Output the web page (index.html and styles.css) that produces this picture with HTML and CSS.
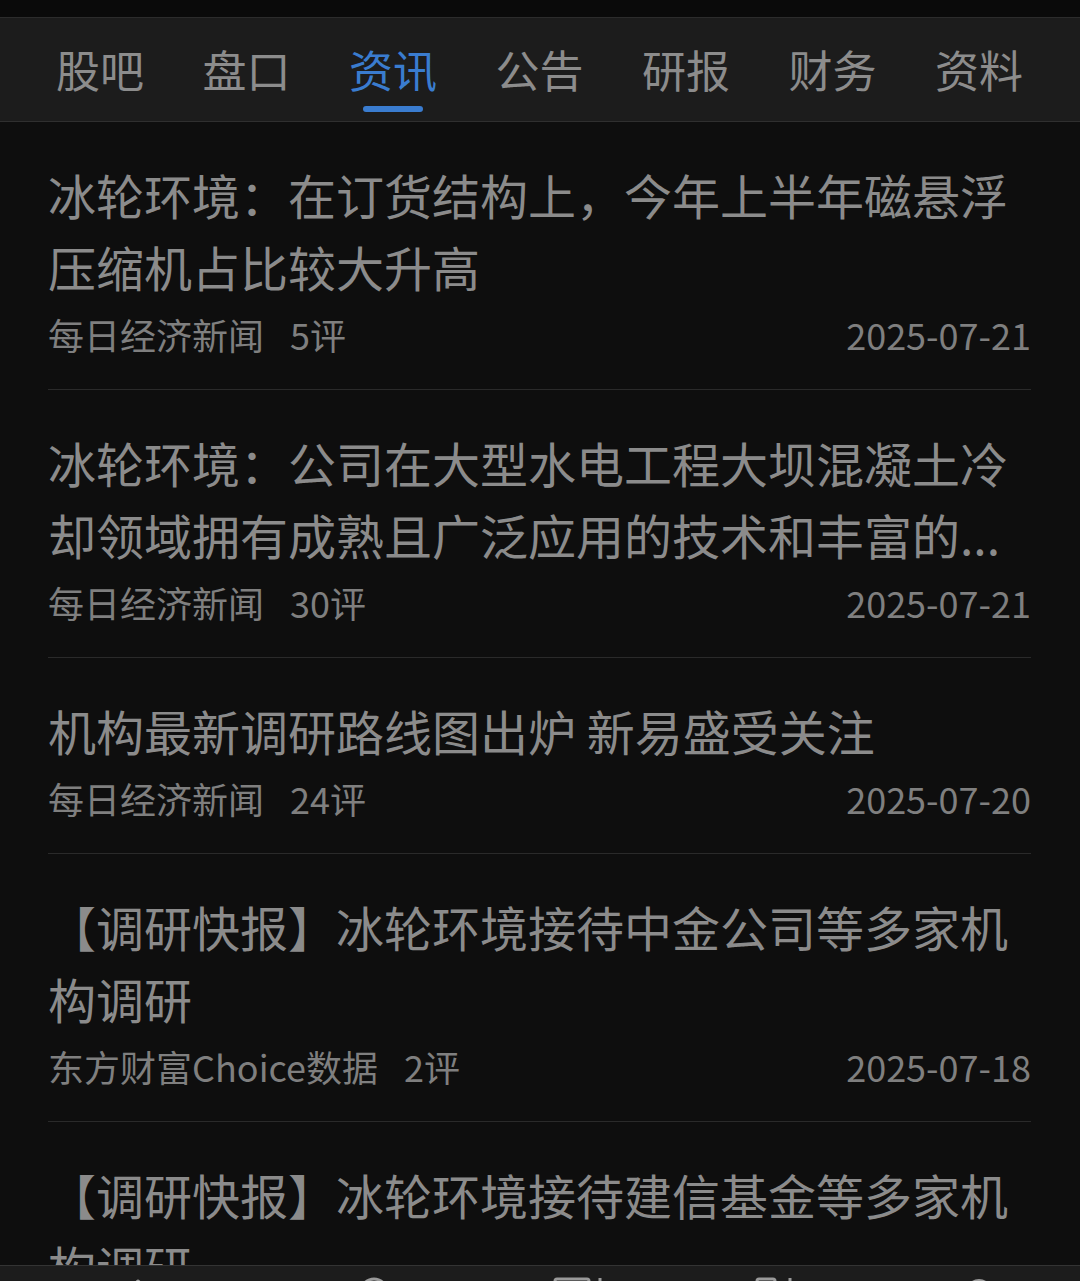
FILE: index.html
```html
<!DOCTYPE html>
<html lang="zh-CN">
<head>
<meta charset="UTF-8" />
<meta name="viewport" content="width=device-width, initial-scale=1" />
<title>资讯</title>
<link rel="stylesheet" href="styles.css">
</head>
<body>

  <!-- Status strip + tab bar -->
  <div class="top-strip"></div>
  <nav class="tabs">
    <div class="tab">股吧</div>
    <div class="tab">盘口</div>
    <div class="tab active">资讯</div>
    <div class="tab">公告</div>
    <div class="tab">研报</div>
    <div class="tab">财务</div>
    <div class="tab">资料</div>
  </nav>

  <!-- News list -->
  <ul class="news-list">
    <li class="news-item">
      <div class="news-title">冰轮环境：在订货结构上，今年上半年磁悬浮压缩机占比较大升高</div>
      <div class="news-meta">
        <span class="source">每日经济新闻<span class="comments">5评</span></span>
        <span class="date">2025-07-21</span>
      </div>
    </li>
    <li class="news-item">
      <div class="news-title">冰轮环境：公司在大型水电工程大坝混凝土冷却领域拥有成熟且广泛应用的技术和丰富的...</div>
      <div class="news-meta">
        <span class="source">每日经济新闻<span class="comments">30评</span></span>
        <span class="date">2025-07-21</span>
      </div>
    </li>
    <li class="news-item">
      <div class="news-title">机构最新调研路线图出炉 新易盛受关注</div>
      <div class="news-meta">
        <span class="source">每日经济新闻<span class="comments">24评</span></span>
        <span class="date">2025-07-20</span>
      </div>
    </li>
    <li class="news-item">
      <div class="news-title">【调研快报】冰轮环境接待中金公司等多家机构调研</div>
      <div class="news-meta">
        <span class="source">东方财富Choice数据<span class="comments">2评</span></span>
        <span class="date">2025-07-18</span>
      </div>
    </li>
    <li class="news-item">
      <div class="news-title">【调研快报】冰轮环境接待建信基金等多家机构调研</div>
      <div class="news-meta">
        <span class="source">东方财富Choice数据<span class="comments">3评</span></span>
        <span class="date">2025-07-17</span>
      </div>
    </li>
  </ul>

  <!-- Bottom bar (mostly off screen) -->
  <div class="bottom-bar">
    <svg class="bb-icon" style="left:118px" width="40" height="40" viewBox="0 0 40 40"><path d="M4 18 L20 4 L36 18" fill="none" stroke="#9a9a9a" stroke-width="3" stroke-linejoin="round"/></svg>
    <svg class="bb-icon" style="left:359px" width="30" height="30" viewBox="0 0 30 30"><circle cx="15" cy="15" r="13" fill="none" stroke="#9a9a9a" stroke-width="3"/></svg>
    <svg class="bb-icon" style="left:553px" width="52" height="30" viewBox="0 0 52 30"><rect x="2" y="2" width="34" height="26" rx="2" fill="none" stroke="#9a9a9a" stroke-width="3"/><path d="M47 1 L47 10" stroke="#9a9a9a" stroke-width="3"/></svg>
    <svg class="bb-icon" style="left:755px" width="44" height="30" viewBox="0 0 44 30"><rect x="2" y="2" width="18" height="26" rx="2" fill="none" stroke="#9a9a9a" stroke-width="3"/><path d="M35 1 L35 10" stroke="#9a9a9a" stroke-width="3"/></svg>
    <svg class="bb-icon" style="left:964px" width="30" height="30" viewBox="0 0 30 30"><circle cx="15" cy="15" r="13" fill="#9a9a9a"/></svg>
  </div>

</body>
</html>
```

FILE: styles.css
```css
/* Base */
html, body {
  margin: 0;
  padding: 0;
}
body {
  font-family: "Noto Sans CJK SC", "Noto Sans", sans-serif;
  background: #0e0e0e;
  color: #8b8b8b;
  width: 1080px;
  height: 1281px;
  overflow: hidden;
  position: relative;
}

/* Top strip & tabs */
.top-strip {
  height: 17px;
  background: #0a0a0a;
  border-bottom: 1px solid #2c2c2c;
}
.tabs {
  display: flex;
  gap: 58.5px;
  height: 104px;
  padding-left: 56px;
  background: #1c1c1c;
  border-bottom: 1px solid #2f2f2f;
  box-sizing: border-box;
}
.tab {
  position: relative;
  font-size: 44px;
  line-height: 44px;
  padding-top: 29px;
  color: #8c8c8c;
  white-space: nowrap;
}
.tab.active {
  color: #3a7ccf;
}
.tab.active::after {
  content: "";
  position: absolute;
  left: 14px;
  right: 14px;
  bottom: 9px;
  height: 6px;
  border-radius: 3px;
  background: #3a7ccf;
}

/* News list */
.news-list {
  list-style: none;
  margin: 0;
  padding: 0 49px 0 48px;
}
.news-item {
  padding: 36px 0 31px;
  border-bottom: 1px solid #2a2a2a;
}
.news-title {
  font-size: 48px;
  line-height: 72px;
  color: #8b8b8b;
}
.news-meta {
  display: flex;
  justify-content: space-between;
  margin-top: 8px;
  font-size: 36px;
  line-height: 48px;
  color: #7f7f7f;
}
.comments {
  margin-left: 26px;
}

/* Bottom bar */
.bottom-bar {
  position: fixed;
  left: 0;
  right: 0;
  bottom: 0;
  height: 15px;
  background: #1c1c1c;
  border-top: 1px solid #333;
  overflow: hidden;
}
.bb-icon {
  position: absolute;
  top: 11px;
}
```
